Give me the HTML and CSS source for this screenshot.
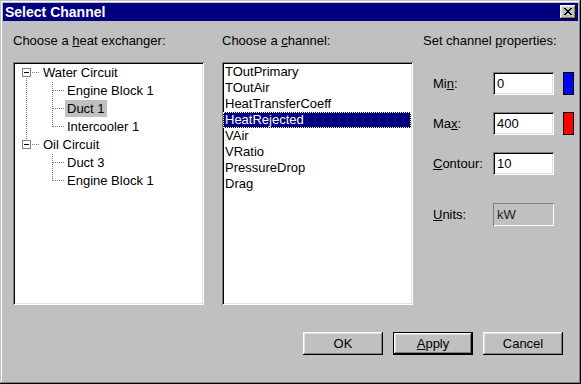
FILE: index.html
```html
<!DOCTYPE html>
<html>
<head>
<meta charset="utf-8">
<title>Select Channel</title>
<link rel="stylesheet" href="styles.css">
</head>
<body>
<div class="window">
  <div class="titlebar">
    <span class="title">Select Channel</span>
    <span class="close">
      <svg width="8" height="7" viewBox="0 0 8 7"><path fill="#000" d="M0 0h2v1h-2zM6 0h2v1h-2zM1 1h2v1h-2zM5 1h2v1h-2zM2 2h4v1h-4zM3 3h2v1h-2zM2 4h4v1h-4zM1 5h2v1h-2zM5 5h2v1h-2zM0 6h2v1h-2zM6 6h2v1h-2z"/></svg>
    </span>
  </div>
  <div class="content">
    <div class="columns">
      <div class="col col-tree">
        <div class="label">Choose a <u>h</u>eat exchanger:</div>
        <div class="box tree">
          <div class="trow">
            <svg class="gut-root" width="26" height="18" viewBox="0 0 26 18">
              <rect x="7.5" y="4.5" width="8" height="8" fill="#fff" stroke="#808080"/>
              <path d="M9 8.5h5" stroke="#000"/>
              <path d="M17 8.5h8" stroke="#808080" stroke-dasharray="1 1"/>
              <path d="M11.5 14v4" stroke="#808080" stroke-dasharray="1 1"/>
            </svg>
            <span class="tlabel">Water Circuit</span>
          </div>
          <div class="trow">
            <svg class="gut-child" width="50" height="18" viewBox="0 0 50 18">
              <path d="M11.5 0v18M37.5 0v18M38 8.5h12" stroke="#808080" stroke-dasharray="1 1"/>
            </svg>
            <span class="tlabel">Engine Block 1</span>
          </div>
          <div class="trow">
            <svg class="gut-child" width="50" height="18" viewBox="0 0 50 18">
              <path d="M11.5 0v18M37.5 0v18M38 8.5h12" stroke="#808080" stroke-dasharray="1 1"/>
            </svg>
            <span class="tlabel selected">Duct 1</span>
          </div>
          <div class="trow">
            <svg class="gut-child" width="50" height="18" viewBox="0 0 50 18">
              <path d="M11.5 0v18M37.5 0v9M38 8.5h12" stroke="#808080" stroke-dasharray="1 1"/>
            </svg>
            <span class="tlabel">Intercooler 1</span>
          </div>
          <div class="trow">
            <svg class="gut-root" width="26" height="18" viewBox="0 0 26 18">
              <path d="M11.5 0v4" stroke="#808080" stroke-dasharray="1 1"/>
              <rect x="7.5" y="4.5" width="8" height="8" fill="#fff" stroke="#808080"/>
              <path d="M9 8.5h5" stroke="#000"/>
              <path d="M17 8.5h8" stroke="#808080" stroke-dasharray="1 1"/>
            </svg>
            <span class="tlabel">Oil Circuit</span>
          </div>
          <div class="trow">
            <svg class="gut-child" width="50" height="18" viewBox="0 0 50 18">
              <path d="M37.5 0v18M38 8.5h12" stroke="#808080" stroke-dasharray="1 1"/>
            </svg>
            <span class="tlabel">Duct 3</span>
          </div>
          <div class="trow">
            <svg class="gut-child" width="50" height="18" viewBox="0 0 50 18">
              <path d="M37.5 0v9M38 8.5h12" stroke="#808080" stroke-dasharray="1 1"/>
            </svg>
            <span class="tlabel">Engine Block 1</span>
          </div>
        </div>
      </div>
      <div class="col col-list">
        <div class="label">Choose a <u>c</u>hannel:</div>
        <div class="box list">
          <div class="item">TOutPrimary</div>
          <div class="item">TOutAir</div>
          <div class="item">HeatTransferCoeff</div>
          <div class="item active">HeatRejected</div>
          <div class="item">VAir</div>
          <div class="item">VRatio</div>
          <div class="item">PressureDrop</div>
          <div class="item">Drag</div>
        </div>
      </div>
      <div class="col col-props">
        <div class="label">Set channel <u>p</u>roperties:</div>
        <div class="props">
          <div class="prop-row">
            <span class="prop-name">Mi<u>n</u>:</span>
            <span class="field">0</span>
            <span class="swatch swatch-blue"></span>
          </div>
          <div class="prop-row">
            <span class="prop-name">Ma<u>x</u>:</span>
            <span class="field">400</span>
            <span class="swatch swatch-red"></span>
          </div>
          <div class="prop-row">
            <span class="prop-name"><u>C</u>ontour:</span>
            <span class="field">10</span>
          </div>
          <div class="prop-row units">
            <span class="prop-name"><u>U</u>nits:</span>
            <span class="field readonly">kW</span>
          </div>
        </div>
      </div>
    </div>
    <div class="buttons">
      <span class="btn">OK</span>
      <span class="btn default"><u>A</u>pply</span>
      <span class="btn">Cancel</span>
    </div>
  </div>
</div>
</body>
</html>
```

FILE: styles.css
```css
* { box-sizing: border-box; }
html, body { margin: 0; padding: 0; }
body {
  width: 581px;
  height: 384px;
  overflow: hidden;
  background: #c0c0c0;
  font-family: "Liberation Sans", Arial, sans-serif;
  font-size: 13px;
  color: #000;
}
.window {
  width: 581px;
  height: 384px;
  padding: 3px;
  background: #c0c0c0;
  box-shadow: inset -1px -1px #000, inset 1px 1px #c0c0c0, inset -2px -2px #808080, inset 2px 2px #fff;
  display: flex;
  flex-direction: column;
}
.titlebar {
  height: 18px;
  background: #000080;
  color: #fff;
  display: flex;
  align-items: center;
  padding: 0 2px 0 2px;
}
.title {
  flex: 1;
  font-weight: bold;
  font-size: 14px;
  line-height: 18px;
  white-space: nowrap;
}
.close {
  width: 16px;
  height: 14px;
  background: #c0c0c0;
  box-shadow: inset -1px -1px #000, inset 1px 1px #fff, inset -2px -2px #808080, inset 2px 2px #dfdfdf;
  display: flex;
  align-items: center;
  justify-content: center;
  padding-bottom: 1px;
}
.close svg { display: block; }
.content {
  flex: 1;
  padding: 12px 15px 0 10px;
  display: flex;
  flex-direction: column;
}
.columns { display: flex; }
.col-tree { flex: none; width: 191px; margin-right: 18px; }
.col-list { flex: none; width: 191px; margin-right: 10px; }
.col-props { flex: 1; min-width: 0; }
.label {
  height: 16px;
  line-height: 16px;
  white-space: nowrap;
}
.box {
  margin-top: 13px;
  height: 243px;
  background: #fff;
  padding: 2px;
  box-shadow: inset 1px 1px #808080, inset -1px -1px #fff, inset 2px 2px #000, inset -2px -2px #dfdfdf;
}
.trow {
  height: 18px;
  display: flex;
  align-items: flex-start;
}
.trow svg { display: block; flex: none; }
.tlabel {
  height: 17px;
  line-height: 17px;
  padding: 0 2px;
  white-space: nowrap;
}
.tlabel.selected { background: #c0c0c0; }
.list { padding: 2px 3px 2px 3px; }
.item {
  height: 16px;
  line-height: 16px;
  padding-left: 0;
  white-space: nowrap;
}
.item.active {
  background: #000080;
  color: #fff;
  margin-left: -2px;
  margin-right: -1px;
  padding-left: 2px;
  outline: 1px dotted #ffff80;
  outline-offset: -1px;
}
.props {
  margin-top: 23px;
  padding-left: 10px;
}
.prop-row {
  display: flex;
  align-items: center;
  height: 23px;
}
.prop-row + .prop-row { margin-top: 17px; }
.prop-row.units { margin-top: 28px; }
.prop-name { flex: none; width: 60px; white-space: nowrap; }
.field {
  flex: none;
  width: 61px;
  height: 23px;
  line-height: 23px;
  padding: 0 4px;
  background: #fff;
  box-shadow: inset 1px 1px #808080, inset -1px -1px #fff, inset 2px 2px #000, inset -2px -2px #dfdfdf;
}
.field.readonly {
  background: #c0c0c0;
  color: #202020;
  box-shadow: inset 1px 1px #808080, inset -1px -1px #fff;
}
.swatch {
  flex: none;
  width: 11px;
  height: 23px;
  margin-left: 9px;
  border: 1px solid #000;
}
.swatch-blue { background: #0000ff; }
.swatch-red { background: #ff0000; }
.buttons {
  margin-top: 27px;
  display: flex;
  justify-content: flex-end;
  gap: 10px;
}
.btn {
  width: 80px;
  height: 23px;
  line-height: 23px;
  text-align: center;
  background: #c0c0c0;
  box-shadow: inset -1px -1px #000, inset 1px 1px #fff, inset -2px -2px #808080, inset 2px 2px #dfdfdf;
}
.btn.default {
  box-shadow: inset 0 0 0 1px #000, inset -2px -2px #000, inset 2px 2px #fff, inset -3px -3px #808080, inset 3px 3px #dfdfdf;
}
```
